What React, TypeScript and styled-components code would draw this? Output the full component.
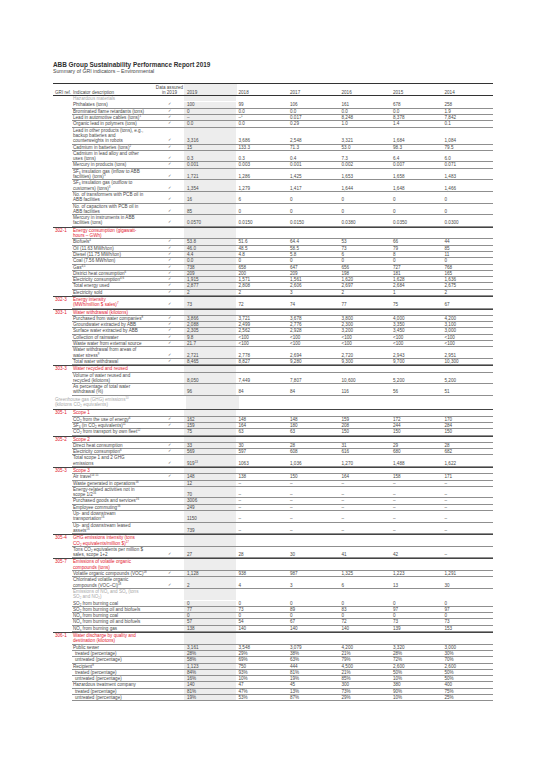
import React from 'react'
import styled, { createGlobalStyle } from 'styled-components'

const GlobalStyle = createGlobalStyle`
  html, body {
    margin: 0;
    padding: 0;
    background: #ffffff;
  }
  body {
    font-family: "Liberation Sans", Arial, sans-serif;
    color: #444444;
  }
`

const RED = '#e3202f'
const INK = '#4a4a4a'

type Vals = React.ReactNode[]

type RowDef =
  | { kind: 'sub'; label: React.ReactNode; wide?: boolean }
  | { kind: 'sec'; gri: string; label: React.ReactNode }
  | { kind: 'data'; label: React.ReactNode; ok: boolean; vals: Vals; indent?: boolean }

const Sup = styled.sup`
  font-size: 2.9px;
  line-height: 0;
  vertical-align: 1.8px;
`

const Sub = styled.sub`
  font-size: 2.9px;
  line-height: 0;
  vertical-align: -0.7px;
`

const d = (label: React.ReactNode, ok: boolean, vals: Vals, indent?: boolean): RowDef => ({
  kind: 'data',
  label,
  ok,
  vals,
  indent,
})
const sec = (gri: string, label: React.ReactNode): RowDef => ({ kind: 'sec', gri, label })
const sub = (label: React.ReactNode, wide?: boolean): RowDef => ({ kind: 'sub', label, wide })
const dash = ['–', '–', '–', '–', '–']

const rows: RowDef[] = [
  sub('Hazardous materials'),
  d('Phthalates (tons)', true, ['100', '99', '106', '161', '678', '258']),
  d('Brominated flame retardants (tons)', true, ['0', '0.0', '0.0', '0.0', '0.0', '1.9']),
  d(<>Lead in automotive cables (tons)<Sup>1</Sup></>, true, ['–', <>–<Sup>1</Sup></>, '0.017', '8,248', '8,378', '7,842']),
  d('Organic lead in polymers (tons)', true, ['0.0', '0.0', '0.29', '1.0', '1.4', '0.1']),
  d(<>Lead in other products (tons), e.g.,<br />backup batteries and<br />counterweights in robots</>, true, ['3,316', '3,686', '2,548', '3,321', '1,684', '1,084']),
  d(<>Cadmium in batteries (tons)<Sup>2</Sup></>, true, ['15', '133.3', '71.3', '53.0', '98.3', '79.5']),
  d(<>Cadmium in lead alloy and other<br />uses (tons)</>, true, ['0.3', '0.3', '0.4', '7.3', '6.4', '6.0']),
  d('Mercury in products (tons)', true, ['0.001', '0.003', '0.001', '0.002', '0.007', '0.071']),
  d(<>SF<Sub>6</Sub> insulation gas (inflow to ABB<br />facilities) (tons)<Sup>3</Sup></>, true, ['1,721', '1,286', '1,425', '1,653', '1,658', '1,483']),
  d(<>SF<Sub>6</Sub> insulation gas (outflow to<br />customers) (tons)<Sup>3</Sup></>, true, ['1,354', '1,279', '1,417', '1,644', '1,648', '1,466']),
  d(<>No. of transformers with PCB oil in<br />ABB facilities</>, true, ['16', '6', '0', '0', '0', '0']),
  d(<>No. of capacitors with PCB oil in<br />ABB facilities</>, true, ['85', '0', '0', '0', '0', '0']),
  d(<>Mercury in instruments in ABB<br />facilities (tons)</>, true, ['0.0570', '0.0150', '0.0150', '0.0380', '0.0350', '0.0300']),

  sec('302-1', <>Energy consumption (gigawatt-<br />hours – GWh)</>),
  d(<>Biofuels<Sup>4</Sup></>, true, ['53.8', '51.6', '64.4', '53', '66', '44']),
  d('Oil (11.63 MWh/ton)', true, ['46.0', '48.5', '58.5', '73', '79', '85']),
  d('Diesel (11.75 MWh/ton)', true, ['4.4', '4.8', '5.8', '6', '8', '11']),
  d('Coal (7.56 MWh/ton)', true, ['0.0', '0', '0', '0', '0', '0']),
  d(<>Gas<Sup>4,5</Sup></>, true, ['738', '658', '647', '656', '727', '768']),
  d(<>District heat consumption<Sup>6</Sup></>, true, ['209', '200', '209', '198', '181', '165']),
  d(<>Electricity consumption<Sup>4,6</Sup></>, true, ['1,915', '1,571', '1,561', '1,620', '1,628', '1,636']),
  d('Total energy used', true, ['2,877', '2,808', '2,606', '2,697', '2,684', '2,675']),
  d('Electricity sold', true, ['2', '2', '3', '2', '1', '2']),

  sec('302-3', <>Energy intensity<br />(MWh/million $ sales)<Sup>7</Sup></>),
  d('', true, ['73', '72', '74', '77', '75', '67']),

  sec('303-1', 'Water withdrawal (kilotons)'),
  d(<>Purchased from water companies<Sup>8</Sup></>, true, ['3,866', '3,721', '3,678', '3,800', '4,000', '4,200']),
  d('Groundwater extracted by ABB', true, ['2,088', '2,499', '2,776', '2,300', '3,350', '3,100']),
  d('Surface water extracted by ABB', true, ['2,305', '2,562', '2,928', '3,200', '3,450', '3,000']),
  d('Collection of rainwater', true, ['9.8', '<100', '<100', '<100', '<100', '<100']),
  d('Waste water from external source', true, ['21.7', '<100', '<100', '<100', '<100', '<100']),
  d(<>Water withdrawal from areas of<br />water stress<Sup>9</Sup></>, true, ['2,721', '2,778', '2,694', '2,720', '2,943', '2,951']),
  d('Total water withdrawal', true, ['8,465', '8,827', '9,280', '9,300', '9,700', '10,300']),

  sec('303-3', 'Water recycled and reused'),
  d(<>Volume of water reused and<br />recycled (kilotons)</>, false, ['8,050', '7,449', '7,807', '10,600', '5,200', '5,200']),
  d(<>As percentage of total water<br />withdrawal (%)</>, false, ['96', '84', '84', '116', '56', '51']),

  sub(<>Greenhouse gas (GHG) emissions<Sup>10</Sup><br />(kilotons CO<Sub>2</Sub> equivalents)</>, true),

  sec('305-1', 'Scope 1'),
  d(<>CO<Sub>2</Sub> from the use of energy<Sup>6</Sup></>, true, ['162', '148', '148', '159', '172', '170']),
  d(<>SF<Sub>6</Sub> (in CO<Sub>2</Sub> equivalents)<Sup>11</Sup></>, true, ['159', '164', '180', '208', '244', '284']),
  d(<>CO<Sub>2</Sub> from transport by own fleet<Sup>12</Sup></>, false, ['75', '63', '63', '150', '150', '150']),

  sec('305-2', 'Scope 2'),
  d('Direct heat consumption', true, ['33', '30', '28', '31', '29', '28']),
  d(<>Electricity consumption<Sup>6</Sup></>, true, ['569', '597', '608', '616', '680', '682']),
  d(<>Total scope 1 and 2 GHG<br />emissions</>, true, [<>919<Sup>13</Sup></>, '1063', '1,036', '1,270', '1,488', '1,622']),

  sec('305-3', 'Scope 3'),
  d(<>Air travel<Sup>14 15</Sup></>, true, ['148', '138', '150', '164', '158', '171']),
  d(<>Waste generated in operations<Sup>16</Sup></>, false, ['12', ...dash]),
  d(<>Energy-related activities not in<br />scope 1/2<Sup>16</Sup></>, false, ['70', ...dash]),
  d(<>Purchased goods and services<Sup>16</Sup></>, false, ['3006', ...dash]),
  d(<>Employee commuting<Sup>16</Sup></>, false, ['249', ...dash]),
  d(<>Up- and downstream<br />transportation<Sup>16</Sup></>, false, ['1150', ...dash]),
  d(<>Up- and downstream leased<br />assets<Sup>16</Sup></>, false, ['739', ...dash]),

  sec('305-4', <>GHG emissions intensity (tons<br />CO<Sub>2</Sub> equivalents/million $)<Sup>17</Sup></>),
  d(<>Tons CO<Sub>2</Sub> equivalents per million $<br />sales, scope 1+2</>, true, ['27', '28', '30', '41', '42', '–']),

  sec('305-7', <>Emissions of volatile organic<br />compounds (tons)</>),
  d(<>Volatile organic compounds (VOC)<Sup>18</Sup></>, true, ['1,128', '938', '987', '1,325', '1,223', '1,291']),
  d(<>Chlorinated volatile organic<br />compounds (VOC–Cl)<Sup>18</Sup></>, true, ['2', '4', '3', '6', '13', '30']),

  sub(<>Emissions of NO<Sub>x</Sub> and SO<Sub>x</Sub> (tons<br />SO<Sub>2</Sub> and NO<Sub>2</Sub>)</>),
  d(<>SO<Sub>2</Sub> from burning coal</>, false, ['0', '0', '0', '0', '0', '0']),
  d(<>SO<Sub>2</Sub> from burning oil and biofuels</>, false, ['77', '73', '89', '83', '97', '97']),
  d(<>NO<Sub>x</Sub> from burning coal</>, false, ['0', '0', '0', '0', '0', '0']),
  d(<>NO<Sub>x</Sub> from burning oil and biofuels</>, false, ['57', '54', '67', '72', '73', '73']),
  d(<>NO<Sub>x</Sub> from burning gas</>, false, ['138', '140', '140', '140', '139', '153']),

  sec('306-1', <>Water discharge by quality and<br />destination (kilotons)</>),
  d('Public sewer', false, ['3,161', '3,548', '3,079', '4,200', '3,320', '3,000']),
  d('treated (percentage)', false, ['28%', '29%', '38%', '21%', '28%', '30%'], true),
  d('untreated (percentage)', false, ['58%', '69%', '63%', '79%', '72%', '70%'], true),
  d(<>Recipient<Sup>8</Sup></>, false, ['1,123', '750', '444', '4,500', '2,600', '2,600']),
  d('treated (percentage)', false, ['84%', '93%', '81%', '21%', '50%', '50%'], true),
  d('untreated (percentage)', false, ['16%', '10%', '19%', '85%', '10%', '50%'], true),
  d('Hazardous treatment company', false, ['140', '47', '45', '300', '380', '400']),
  d('treated (percentage)', false, ['81%', '47%', '13%', '73%', '90%', '75%'], true),
  d('untreated (percentage)', false, ['19%', '53%', '87%', '29%', '10%', '25%'], true),
]

const Page = styled.div`
  padding: 61px 0 0 53px;
  width: 440px;
`

const Title = styled.h1`
  margin: 0;
  font-size: 6.4px;
  line-height: 7px;
  font-weight: 600;
  color: #303030;
`

const Subtitle = styled.h2`
  margin: 0 0 9px;
  font-size: 5.2px;
  line-height: 6px;
  font-weight: 400;
  color: #444444;
`

const Table = styled.div`
  display: flex;
  flex-direction: column;
  font-size: 4.6px;
  line-height: 5.3px;
  white-space: nowrap;
  color: ${INK};
  border-top: 1px solid #333333;
`

const Row = styled.div<{ $sec?: boolean }>`
  display: grid;
  grid-template-columns: 19px 1fr;
  border-top: ${p => (p.$sec ? '1px solid #444444' : 'none')};
`

const Gri = styled.div<{ $red?: boolean }>`
  padding-left: 2px;
  color: ${p => (p.$red ? RED : INK)};
`

const Line = styled.div<{ $rule?: boolean }>`
  display: grid;
  grid-template-columns: 83px 29px repeat(6, 1fr);
  border-bottom: ${p => (p.$rule ? '1px solid #8f8f8f' : '1px solid transparent')};
`

const Label = styled.div<{ $tone?: 'red' | 'gray'; $indent?: boolean }>`
  padding-left: ${p => (p.$indent ? '3px' : '1px')};
  color: ${p => (p.$tone === 'red' ? RED : p.$tone === 'gray' ? '#a8a8a8' : INK)};
  display: flex;
  align-items: flex-end;
`

const Check = styled.div`
  display: flex;
  align-items: flex-end;
  justify-content: center;
  font-size: 3.8px;
  color: #555555;
`

const Cell = styled.div<{ $shade?: boolean }>`
  padding-left: 3px;
  background: ${p => (p.$shade ? '#ededed' : 'transparent')};
  display: flex;
  align-items: flex-end;
`

const HeadRow = styled.div`
  display: grid;
  grid-template-columns: 19px 83px 29px repeat(6, 1fr);
  border-bottom: 1px solid #333333;
  padding-top: 2px;
  align-items: end;
  background: linear-gradient(to right, transparent 131px, #ededed 131px, #ededed 183.5px, transparent 183.5px);
`

const HeadCell = styled.div<{ $center?: boolean; $pad?: number }>`
  text-align: ${p => (p.$center ? 'center' : 'left')};
  padding-left: ${p => p.$pad ?? 0}px;
  white-space: normal;
  line-height: 4.6px;
`

const Wide = styled.div`
  grid-column: 1 / -1;
  color: #a8a8a8;
`

const Shaded = styled.div`
  display: grid;
  grid-template-columns: 131px 52.5px 1fr;
  padding-left: 2px;
`

const WideText = styled.div`
  padding: 1px 0 2px;
`

const ShadeFill = styled.div`
  background: #ededed;
`

const years = ['2019', '2018', '2017', '2016', '2015', '2014']

function Values({ vals }: { vals: Vals }) {
  return (
    <>
      {vals.map((v, i) => (
        <Cell key={i} $shade={i === 0}>
          <span>{v}</span>
        </Cell>
      ))}
    </>
  )
}

function EmptyValues() {
  return <Values vals={['', '', '', '', '', '']} />
}

function TableRow({ r, next }: { r: RowDef; next?: RowDef }) {
  if (r.kind === 'sub' && r.wide) {
    return (
      <Row>
        <Wide>
          <Shaded>
            <WideText>{r.label}</WideText>
            <ShadeFill />
            <div />
          </Shaded>
        </Wide>
      </Row>
    )
  }
  if (r.kind === 'sub') {
    return (
      <Row>
        <Gri />
        <Line>
          <Label $tone="gray">
            <span>{r.label}</span>
          </Label>
          <Check />
          <EmptyValues />
        </Line>
      </Row>
    )
  }
  if (r.kind === 'sec') {
    const merged = next && next.kind === 'data' && next.label === '' ? next : null
    return (
      <Row $sec>
        <Gri $red>{r.gri}</Gri>
        <Line $rule>
          <Label $tone="red">
            <span>{r.label}</span>
          </Label>
          <Check>{merged && merged.ok ? '✓' : ''}</Check>
          {merged ? <Values vals={merged.vals} /> : <EmptyValues />}
        </Line>
      </Row>
    )
  }
  if (r.label === '') return null
  return (
    <Row>
      <Gri />
      <Line $rule>
        <Label $indent={r.indent}>
          <span>{r.label}</span>
        </Label>
        <Check>{r.ok ? '✓' : ''}</Check>
        <Values vals={r.vals} />
      </Line>
    </Row>
  )
}

export default function App() {
  return (
    <>
      <GlobalStyle />
      <Page>
        <Title>ABB Group Sustainability Performance Report 2019</Title>
        <Subtitle>Summary of GRI indicators – Environmental</Subtitle>
        <Table>
          <HeadRow>
            <HeadCell $pad={2}>GRI ref.</HeadCell>
            <HeadCell $pad={1}>Indicator description</HeadCell>
            <HeadCell $center>
              Data assured
              <br />
              in 2019
            </HeadCell>
            {years.map(y => (
              <HeadCell key={y} $pad={3}>
                {y}
              </HeadCell>
            ))}
          </HeadRow>
          {rows.map((r, i) => (
            <TableRow key={i} r={r} next={rows[i + 1]} />
          ))}
        </Table>
      </Page>
    </>
  )
}
